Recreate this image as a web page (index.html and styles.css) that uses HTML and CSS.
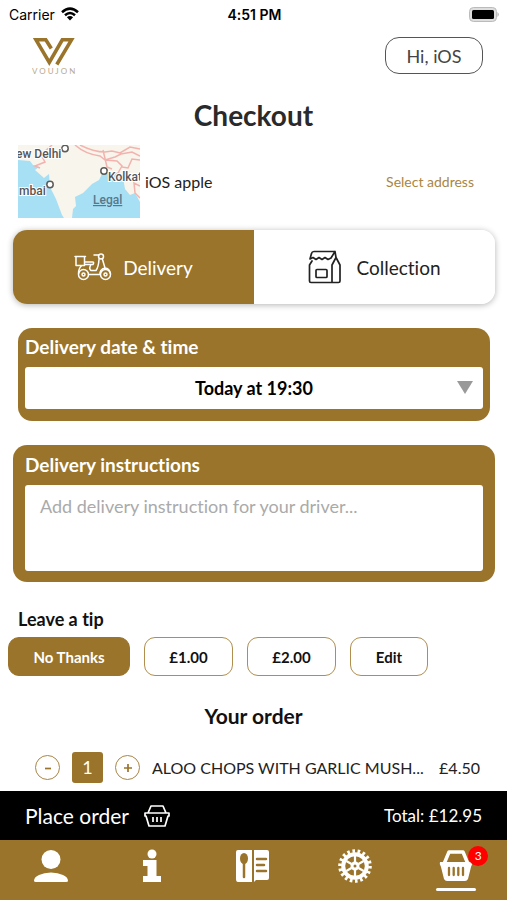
FILE: index.html
```html
<!DOCTYPE html>
<html lang="en">
<head>
<meta charset="utf-8">
<meta name="viewport" content="width=device-width, initial-scale=1">
<title>Checkout</title>
<link rel="stylesheet" href="styles.css">
</head>
<body>
<div class="status">
  <span class="status-carrier">Carrier
    <svg width="18" height="14" viewBox="0 0 18 14" fill="none" stroke="#000" stroke-width="2.5"><path d="M1 5.2Q9-2 17 5.2M4 8.2Q9 3.7 14 8.2"/><path d="M9 13.5L5.9 10.3Q9 7.7 12.1 10.3Z" fill="#000" stroke="none"/></svg>
  </span>
  <span class="status-time">4:51 PM</span>
  <span class="status-battery">
    <svg width="31" height="15" viewBox="0 0 31 15"><rect x="0.5" y="0.5" width="27" height="14" rx="4" fill="#ddd" stroke="#bbb"/><rect x="3" y="3" width="22" height="9" rx="1.5"/><path d="M28.5 5Q31 7.5 28.5 10Z" fill="#aaa"/></svg>
  </span>
</div>
<header class="header">
  <svg class="logo" width="46" height="38" viewBox="0 0 46 38" role="img" aria-label="Voujon">
    <path d="M19.3 11.5L13.8 2.8H4L17.3 25.5L30.3 2.8H39.5L24.800 27.500" fill="none" stroke="#9a742a" stroke-width="3.6"/>
    <text x="0" y="37" class="logo-text">V O U J O N</text>
  </svg>
  <button class="account" type="button">Hi, iOS</button>
</header>
<main class="main">
  <h1 class="title">Checkout</h1>
  <section class="address">
    <svg class="map" width="122" height="73" viewBox="0 0 122 73" role="img" aria-label="Map of India">
      <rect width="122" height="73" fill="#f8f5ec"/>
      <path d="M0 15L12 16L15 20L21 22L17 25L26 33L31 29L32 42L38 54L44 70L46 73H0ZM54 73L55 64L58 61L57 52L65 48L74 39L81 35L84 29L96 28L101 27L105 33L107 44L112 50L117 48L122 57V73Z" fill="#a7dff5"/>
      <g fill="none" stroke="#f2b3ae" stroke-width="1.5"><path d="M34 0L23 10L27 17L17 21L22 23M57 0Q67 9 82 11L87 15L97 12L103 9L114 7L122 11M62 0Q76 7 87 7L94 6L102 8L112 2L122 4M85 5L89 22L94 24M87 15L99 16L104 21L100 28M122 15L114 14L110 23L104 22M122 41L116 38L117 48L122 53"/></g>
      <g fill="#fff" stroke="#5c5b58" stroke-width="1.5"><circle cx="47" cy="3.5" r="3.2"/><circle cx="86" cy="26" r="3.2"/><circle cx="32" cy="39.5" r="3.2"/></g>
      <g class="map-text"><text x="-2" y="13">ew Delhi</text><text x="90" y="36">Kolkat</text><text x="1" y="50">mbai</text><text x="75" y="59" class="map-legal">Legal</text></g>
    </svg>
    <span class="address-name">iOS apple</span>
    <a class="address-link" href="#address">Select address</a>
  </section>
  <div class="modes">
    <button class="mode mode-active" type="button">
      <svg width="38" height="28" viewBox="0 0 38 28" fill="none" stroke="currentColor" stroke-width="1.5" stroke-linejoin="round" stroke-linecap="round"><path d="M2 3.500H10.500V12.500H2ZM1 3.500H11.500M11 9H18.500Q20.500 9 19 11.500H10.500M8 12.500Q4.500 15 4.500 20.500M17 11.500Q14.500 16 17 17.500H22Q24.500 14 25 6.500M14.500 21.500H26Q25.500 16.500 31 15L28.500 6.500M20 2H24.500M31 15Q35.500 15.500 36.500 20.500"/><circle cx="27" cy="3.500" r="2.500"/><circle cx="9.500" cy="21.500" r="5"/><circle cx="31.500" cy="21.500" r="5"/><circle cx="9.500" cy="21.500" r="1.500"/><circle cx="31.500" cy="21.500" r="1.500"/></svg>
      Delivery
    </button>
    <button class="mode" type="button">
      <svg width="34" height="34" viewBox="0 0 34 34" fill="none" stroke="currentColor" stroke-width="1.7" stroke-linejoin="round" stroke-linecap="round"><path d="M27 1.500H6Q4 1.500 3.500 3.500L2 9L5 7.500L8 9.500L11 7.500L14 9.500L17 7.500L20 9.500L23 8L27 1.500L28 7.500L32 15V31Q32 32.500 30.500 32.500H3Q1.500 32.500 1.500 31V15L4 11M28 7.500L24 15V32"/><rect x="8" y="19.500" width="11" height="8" rx="1"/></svg>
      Collection
    </button>
  </div>
  <section class="card card-date">
    <label class="card-label" for="time">Delivery date &amp; time</label>
    <div class="select-wrap">
      <select class="field select" id="time"><option>Today at 19:30</option></select>
      <svg class="select-arrow" width="16" height="13" viewBox="0 0 16 13"><path d="M0 0H16L8 13Z" fill="#999"/></svg>
    </div>
  </section>
  <section class="card card-notes">
    <label class="card-label" for="notes">Delivery instructions</label>
    <textarea class="field notes" id="notes" placeholder="Add delivery instruction for your driver..."></textarea>
  </section>
  <h2 class="tip-title">Leave a tip</h2>
  <div class="tips">
    <button class="tip tip-wide tip-active" type="button">No Thanks</button>
    <button class="tip" type="button">£1.00</button>
    <button class="tip" type="button">£2.00</button>
    <button class="tip tip-narrow" type="button">Edit</button>
  </div>
  <h2 class="order-title">Your order</h2>
  <div class="item">
    <button class="step" type="button" aria-label="Remove one"><svg width="24" height="24" viewBox="0 0 24 24"><path d="M9 12.5h6" stroke="currentColor" stroke-width="1.7"/></svg></button>
    <span class="qty">1</span>
    <button class="step" type="button" aria-label="Add one"><svg width="24" height="24" viewBox="0 0 24 24"><path d="M8 12h8M12 8v8" stroke="currentColor" stroke-width="1.7"/></svg></button>
    <span class="item-name">ALOO CHOPS WITH GARLIC MUSH...</span>
    <span class="item-price">£4.50</span>
  </div>
</main>
<footer class="footer">
  <div class="checkout">
    <button class="place" type="button">Place order
      <svg width="28" height="24" viewBox="0 0 28 24" fill="none" stroke="currentColor" stroke-width="1.7" stroke-linejoin="round"><path d="M5 9L8 2H20L23 9M2 9H26V12H25L22 22H6L3 12H2ZM10 13v5M14 13v5M18 13v5"/></svg>
    </button>
    <span class="total">Total: £12.95</span>
  </div>
  <nav class="nav">
    <a class="nav-link" href="#account" aria-label="Account"><svg width="36" height="36" viewBox="0 0 36 36" fill="currentColor"><circle cx="18" cy="11.5" r="9.5"/><path d="M1 33Q1 29 6 27Q11 24.500 18 24.500T30 27Q35 29 35 33Q35 34 33 34H3Q1 34 1 33Z"/></svg></a>
    <a class="nav-link" href="#info" aria-label="Information"><svg width="36" height="36" viewBox="0 0 36 36" fill="currentColor"><circle cx="18" cy="6" r="4.500"/><path d="M9 12H22.500V28H27V34H9V28H13.500V18H9Z"/></svg></a>
    <a class="nav-link" href="#menu" aria-label="Menu"><svg width="36" height="36" viewBox="0 0 36 36"><path d="M3 2H17V34H3Q1 34 1 31V4Q1 2 3 2ZM19 2H32Q34 2 34 4V30Q34 32 32 32H21L19 34Z" fill="currentColor"/><ellipse cx="9" cy="10.500" rx="4" ry="5.500" fill="#9a742a"/><path d="M9 15V29" stroke="#9a742a" stroke-width="2.500" stroke-linecap="round"/><path d="M22 11H31M22 17H29M22 23H31" stroke="#9a742a" stroke-width="2.500" stroke-linecap="round"/></svg></a>
    <a class="nav-link" href="#settings" aria-label="Settings"><svg width="36" height="36" viewBox="0 0 36 36" fill="none" stroke="currentColor"><circle cx="18" cy="18" r="15" stroke-width="3.600" pathLength="36" stroke-dasharray="1 1"/><circle cx="18" cy="18" r="11.800" stroke-width="4"/><circle cx="18" cy="18" r="3" stroke-width="3"/><path d="M18 8V14M18 22V28M9.300 13L14.500 16M21.500 20L26.700 23M9.300 23L14.500 20M21.500 16L26.700 13" stroke-width="2.200"/></svg></a>
    <a class="nav-link nav-current" href="#basket" aria-label="Basket"><svg width="36" height="36" viewBox="0 0 36 36"><path d="M6 16L11 4H25L30 16" fill="none" stroke="currentColor" stroke-width="3.500" stroke-linejoin="round"/><path d="M2 14H34Q35 16 33 19L30 31Q29 33 27 33H9Q7 33 6 31L3 19Q1 16 2 14Z" fill="currentColor"/><path d="M11 20V27M15.700 20V27M20.300 20V27M25 20V27" stroke="#9a742a" stroke-width="2.300" stroke-linecap="round"/></svg><span class="badge">3</span></a>
  </nav>
</footer>
</body>
</html>
```
FILE: styles.css
```css
* { box-sizing: border-box; }

body {
  display: flex;
  flex-direction: column;
  min-height: 100vh;
  margin: 0;
  background: #fff;
  color: #222;
  font-family: Lato, "Liberation Sans", sans-serif;
  font-size: 16px;
  font-variant-ligatures: none;
}

button, select, textarea {
  margin: 0;
  font-family: inherit;
  font-variant-ligatures: none;
}

svg { display: block; flex: none; }
h1, h2 { margin: 0; }

.status {
  display: grid;
  grid-template-columns: 1fr auto 1fr;
  align-items: center;
  height: 28px;
  padding: 0 7px 0 9px;
  color: #000;
  font-family: Inter, sans-serif;
  font-size: 14px;
}
.status-carrier { display: flex; align-items: center; gap: 6px; }
.status-time { font-weight: 600; }
.status-battery { justify-self: end; }

.header {
  display: flex;
  align-items: flex-start;
  justify-content: space-between;
  padding: 9px 24px 0 32px;
}
.logo-text { fill: #b9a988; font-family: Lato, sans-serif; font-size: 8px; }
.account {
  height: 37px;
  min-width: 98px;
  border: 1px solid #555;
  border-radius: 14px;
  background: #fff;
  color: #444;
  font-size: 18px;
}

.main { flex: 1; }
.title {
  padding: 22px 0 12px;
  color: #2a2a2a;
  font-size: 28px;
  line-height: 36px;
  text-align: center;
}

.address {
  display: flex;
  align-items: center;
  gap: 5px;
  padding: 0 33px 0 18px;
}
.map-text { fill: #555; stroke: #fff; stroke-width: 2px; paint-order: stroke; font-family: Roboto, sans-serif; font-size: 12px; font-weight: 500; }
.map-legal { fill: #56788a; stroke: none; text-decoration: underline; }
.address-link {
  margin-left: auto;
  color: #a98645;
  font-size: 14px;
  text-decoration: none;
}

.modes {
  display: flex;
  height: 74px;
  margin: 12px 12px 0 13px;
  overflow: hidden;
  border-radius: 14px;
  box-shadow: 0 1px 6px rgba(0, 0, 0, 0.3);
}
.mode {
  display: flex;
  flex: 1;
  align-items: center;
  justify-content: center;
  gap: 14px;
  padding: 0;
  border: 0;
  background: #fff;
  color: #222;
  font-size: 19px;
}
.mode-active { gap: 11px; background: #9a742a; color: #fff; }

.card {
  border-radius: 14px;
  background: #9a742a;
}
.card-date { margin: 24px 17px 0 18px; padding: 7px 7px 12px; }
.card-notes { margin: 24px 12px 0 13px; padding: 8px 12px 11px; }
.card-label {
  display: block;
  height: 32px;
  color: #fff;
  font-size: 19px;
  font-weight: 700;
  line-height: 24px;
}
.field {
  display: block;
  width: 100%;
  border: 0;
  border-radius: 3px;
  background: #fff;
}
.select-wrap { position: relative; }
.select {
  height: 42px;
  padding: 0;
  appearance: none;
  color: #000;
  font-size: 18px;
  font-weight: 700;
  text-align: center;
  text-align-last: center;
}
.select-arrow {
  position: absolute;
  top: 14px;
  right: 10px;
  pointer-events: none;
}
.notes {
  height: 86px;
  padding: 9px 15px;
  resize: none;
  font-size: 18px;
  line-height: 24px;
}
.notes::placeholder { color: #aaa; }

.tip-title {
  padding: 25px 18px 6px;
  color: #111;
  font-size: 18px;
  line-height: 24px;
}
.tips { display: flex; gap: 14px; padding: 0 8px; }
.tip {
  width: 89px;
  height: 39px;
  padding: 0;
  border: 1px solid #b08e4e;
  border-radius: 11px;
  background: #fff;
  color: #111;
  font-size: 15px;
  font-weight: 700;
}
.tip-wide { width: 122px; }
.tip-narrow { width: 78px; }
.tip-active { border-color: #9a742a; background: #9a742a; color: #fff; }

.order-title {
  padding: 25px 0 21px;
  color: #111;
  font-size: 21px;
  line-height: 30px;
  text-align: center;
}
.item {
  display: flex;
  align-items: center;
  gap: 12px;
  padding: 0 27px 8px 35px;
  font-size: 16px;
}
.step {
  display: grid;
  flex: none;
  place-items: center;
  width: 25px;
  height: 25px;
  padding: 0;
  border: 1px solid #a98645;
  border-radius: 50%;
  background: #fff;
  color: #9a742a;
}
.qty {
  flex: none;
  width: 31px;
  border-radius: 3px;
  background: #9a742a;
  color: #fff;
  font-size: 18px;
  line-height: 31px;
  text-align: center;
}
.item-name {
  flex: 1;
  min-width: 0;
  overflow: hidden;
  text-overflow: ellipsis;
  white-space: nowrap;
}

.checkout {
  display: flex;
  align-items: center;
  justify-content: space-between;
  height: 49px;
  padding: 0 25px;
  background: #000;
  color: #fff;
  font-size: 17px;
}
.place {
  display: flex;
  align-items: center;
  gap: 14px;
  padding: 0;
  border: 0;
  background: none;
  color: inherit;
  font-size: 21px;
}

.nav {
  display: grid;
  grid-template-columns: repeat(5, 1fr);
  height: 60px;
  background: #9a742a;
}
.nav-link {
  position: relative;
  display: flex;
  flex-direction: column;
  align-items: center;
  padding-top: 8px;
  color: #fff;
  text-decoration: none;
}
.nav-current::after {
  width: 40px;
  height: 3px;
  margin-top: 4px;
  border-radius: 2px;
  background: #fff;
  content: "";
}
.badge {
  position: absolute;
  top: 6px;
  left: calc(50% + 12px);
  width: 20px;
  border-radius: 50%;
  background: #f00;
  font-size: 12px;
  line-height: 20px;
  text-align: center;
}
```
